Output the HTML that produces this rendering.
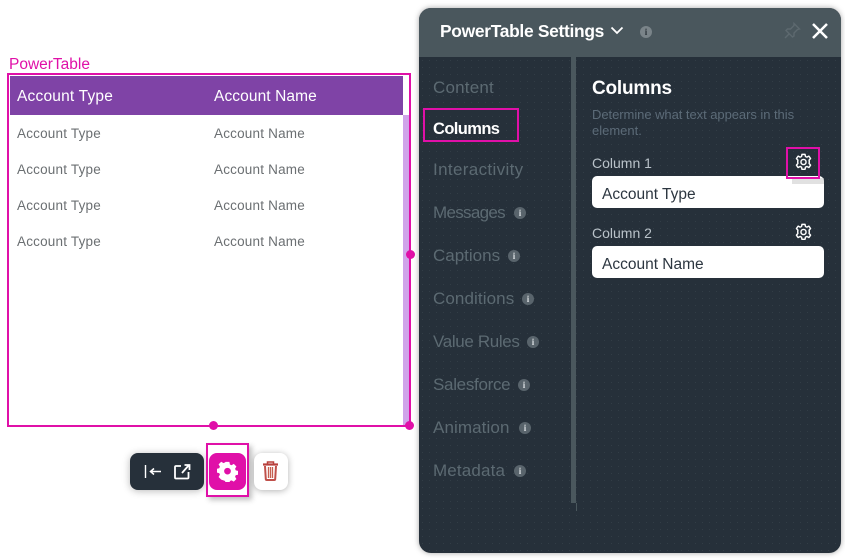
<!DOCTYPE html>
<html>
<head>
<meta charset="utf-8">
<style>
html,body{margin:0;padding:0;background:#fff;}
body{width:845px;height:560px;position:relative;overflow:hidden;font-family:"Liberation Sans",sans-serif;}
.a{position:absolute;white-space:nowrap;}
.t{font-size:13.5px;color:#6b6f72;letter-spacing:.2px;line-height:16px;}
.n{font-size:17px;color:#5c6a72;line-height:20px;left:433px;}
.i{position:absolute;width:12px;height:12px;border-radius:50%;background:#59646c;color:#d8dde0;font:bold 9px/12px "Liberation Serif",serif;text-align:center;}
.in{left:592px;width:232px;height:32px;background:#fff;border-radius:5px;}
.il{font-size:15.5px;color:#2c3640;line-height:18px;left:602px;}
.lb{font-size:14px;color:#b9c2c9;line-height:16px;left:592px;}
</style>
</head>
<body>
<div class="a" style="left:9px;top:56px;font-size:15.5px;line-height:18px;color:#e010a8;">PowerTable</div>

<div class="a" style="left:403px;top:115px;width:6px;height:310px;background:#d0a3ea;"></div>
<div class="a" style="left:10px;top:76px;width:393px;height:39px;background:#7f43a6;"></div>
<div class="a" style="left:17px;top:88px;font-size:15.500px;line-height:18px;color:#fff;letter-spacing:.2px;">Account Type</div>
<div class="a" style="left:214px;top:88px;font-size:15.500px;line-height:18px;color:#fff;letter-spacing:.1px;">Account Name</div>

<div class="a t" style="left:17px;top:126px;">Account Type</div><div class="a t" style="left:214px;top:126px;">Account Name</div>
<div class="a t" style="left:17px;top:162px;">Account Type</div><div class="a t" style="left:214px;top:162px;">Account Name</div>
<div class="a t" style="left:17px;top:198px;">Account Type</div><div class="a t" style="left:214px;top:198px;">Account Name</div>
<div class="a t" style="left:17px;top:234px;">Account Type</div><div class="a t" style="left:214px;top:234px;">Account Name</div>

<div class="a" style="left:7px;top:73px;width:400px;height:350px;border:2px solid #e010a8;"></div>
<div class="a" style="left:406px;top:250px;width:9px;height:9px;border-radius:50%;background:#e010a8;"></div>
<div class="a" style="left:209px;top:421px;width:9px;height:9px;border-radius:50%;background:#e010a8;"></div>
<div class="a" style="left:405px;top:421px;width:9px;height:9px;border-radius:50%;background:#e010a8;"></div>

<div class="a" style="left:130px;top:453px;width:74px;height:37px;border-radius:8px;background:#26303a;box-shadow:0 1px 8px rgba(0,0,0,.28);"></div>
<svg class="a" style="left:130px;top:453px;" width="74" height="37" viewBox="0 0 74 37" fill="none" stroke="#fff">
<path d="M15.500 12v13" stroke-width="1.400"/>
<path d="M31 18.500H20M24 15.500l-3.500 3 3.500 3" stroke-width="1.500"/>
<path d="M51 13h-5a1 1 0 0 0-1 1v10.500a1 1 0 0 0 1 1h11.500a1 1 0 0 0 1-1V19" stroke-width="1.800"/>
<path d="M52 20l7-8M54.500 12H59.500V17" stroke-width="1.800"/>
</svg>

<div class="a" style="left:209px;top:453px;width:37px;height:37px;border-radius:8px;background:#e010a8;"></div>
<div class="a" style="left:206px;top:443px;width:39px;height:50px;border:2px solid #e010a8;box-shadow:3px 3px 5px rgba(0,0,0,.25);"></div>
<svg class="a" style="left:217px;top:461px;" width="21" height="21" viewBox="0 0 20 20">
<path fill="#fff" fill-rule="evenodd" d="M8.200.800h3.600l.5 2.500 1.500.7 2.200-1.300 2.500 2.500-1.300 2.200.7 1.500 2.300.5v3.600l-2.300.5-.7 1.500 1.300 2.200-2.500 2.500-2.200-1.300-1.500.7-.5 2.300H8.200l-.5-2.300-1.500-.7L4 17.700l-2.500-2.500 1.300-2.200-.7-1.500-2.300-.5V7.400l2.300-.5.7-1.500L1.500 3.200 4 .7l2.200 1.300 1.500-.7zM10 6.500a3.200 3.200 0 1 0 0 6.400 3.200 3.200 0 0 0 0-6.400z"/>
</svg>

<div class="a" style="left:254px;top:453px;width:34px;height:37px;border-radius:8px;background:#fff;box-shadow:0 1px 7px rgba(0,0,0,.3);"></div>
<svg class="a" style="left:262px;top:461px;" width="17" height="20" viewBox="0 0 17 20" fill="none">
<path d="M1 3.500h15" stroke="#b8403c" stroke-width="2.200"/>
<path d="M5.500 2.500V1h6v1.500" stroke="#b8403c" stroke-width="1.500"/>
<path d="M3 5l.8 13a1 1 0 0 0 1 1h7.400a1 1 0 0 0 1-1L14 5" stroke="#c0504a" stroke-width="2"/>
<path d="M6.500 6v11M8.500 6v11M10.500 6v11" stroke="#c65f4f" stroke-width="1.300"/>
</svg>

<!-- Panel -->
<div class="a" style="left:419px;top:8px;width:422px;height:545px;border-radius:12px;background-color:#26303a;background-image:radial-gradient(circle,#323d46 .6px,transparent .8px);background-size:7px 7px;overflow:hidden;box-shadow:0 0 6px rgba(0,0,0,.35);">
  <div style="position:absolute;left:0;top:0;width:422px;height:49px;background:#4a575d;"></div>
  <div style="position:absolute;left:152px;top:49px;width:5px;height:446px;background:#4a575d;"></div>
  <div style="position:absolute;left:157px;top:495px;width:1px;height:8px;background:#4a575d;"></div>
</div>

<div class="a" style="left:440px;top:20px;font-size:17.400px;font-weight:bold;line-height:22px;color:#fff;letter-spacing:-.3px;">PowerTable Settings</div>
<svg class="a" style="left:609px;top:25px;" width="16" height="12" viewBox="0 0 16 12" fill="none"><path d="M2.500 2.500l5.500 5.500 5.500-5.500" stroke="#fff" stroke-width="1.800"/></svg>
<div class="i" style="left:640px;top:26px;background:#7a8489;color:#2b343a;">i</div>
<svg class="a" style="left:783px;top:22px;" width="18" height="18" viewBox="0 0 18 18" fill="none" stroke="#5d696f" stroke-width="1.400"><path d="M11 1.500l5.500 5.500-2 .5-3.500 3.500v3L9.500 15 3 8.500 4.500 7h3L11 3.500zM6 12l-4 4"/></svg>
<svg class="a" style="left:811px;top:22px;" width="18" height="18" viewBox="0 0 18 18" fill="none" stroke="#fff" stroke-width="2.500"><path d="M2 2l14 14M16 2L2 16"/></svg>

<div class="a n" style="top:78px;letter-spacing:.2px;">Content</div>
<div class="a n" style="top:119px;color:#fff;font-weight:bold;font-size:16.500px;letter-spacing:-.6px;">Columns</div>
<div class="a" style="left:423px;top:108px;width:92px;height:30px;border:2px solid #e010a8;"></div>
<div class="a n" style="top:160px;letter-spacing:.35px;">Interactivity</div>
<div class="a n" style="top:203px;letter-spacing:-.7px;">Messages</div><div class="i" style="left:514px;top:207px;">i</div>
<div class="a n" style="top:246px;">Captions</div><div class="i" style="left:508px;top:250px;">i</div>
<div class="a n" style="top:289px;letter-spacing:.1px;">Conditions</div><div class="i" style="left:522px;top:293px;">i</div>
<div class="a n" style="top:332px;letter-spacing:-.35px;">Value Rules</div><div class="i" style="left:527px;top:336px;">i</div>
<div class="a n" style="top:375px;letter-spacing:-.3px;">Salesforce</div><div class="i" style="left:518px;top:379px;">i</div>
<div class="a n" style="top:418px;letter-spacing:.1px;">Animation</div><div class="i" style="left:519px;top:422px;">i</div>
<div class="a n" style="top:461px;letter-spacing:.15px;">Metadata</div><div class="i" style="left:514px;top:465px;">i</div>

<div class="a" style="left:592px;top:77px;font-size:19px;font-weight:bold;line-height:24px;color:#fff;letter-spacing:-.2px;">Columns</div>
<div class="a" style="left:592px;top:107px;font-size:13px;line-height:16px;color:#5c6b78;letter-spacing:-.05px;">Determine what text appears in this</div>
<div class="a" style="left:592px;top:123px;font-size:13px;line-height:16px;color:#5c6b78;">element.</div>

<div class="a lb" style="top:155px;">Column 1</div>
<div class="a in" style="top:176px;"></div>
<div class="a il" style="top:186px;">Account Type</div>
<div class="a lb" style="top:225px;">Column 2</div>
<div class="a in" style="top:246px;"></div>
<div class="a il" style="top:256px;">Account Name</div>

<div class="a" style="left:792px;top:178px;width:32px;height:6px;background:#c9c9c9;opacity:.55;"></div>
<svg class="a" style="left:795px;top:153px;" width="17" height="18" viewBox="0 0 20 20" fill="none" stroke="#fff" stroke-width="1.700" stroke-linejoin="round"><path d="M8.200 1h3.600l.5 2.500 1.700.8 2.300-1.200 2 2.800-1.700 1.900.2 2-.2 2 1.700 1.900-2 2.800-2.300-1.200-1.700.8-.5 2.500H8.200l-.5-2.500-1.700-.8-2.300 1.200-2-2.800 1.700-1.900-.2-2 .2-2-1.700-1.900 2-2.800 2.300 1.200 1.700-.8z"/><circle cx="10" cy="10" r="3"/></svg>
<svg class="a" style="left:795px;top:223px;" width="17" height="18" viewBox="0 0 20 20" fill="none" stroke="#fff" stroke-width="1.700" stroke-linejoin="round"><path d="M8.200 1h3.600l.5 2.500 1.700.8 2.300-1.200 2 2.800-1.700 1.900.2 2-.2 2 1.700 1.900-2 2.800-2.300-1.200-1.700.8-.5 2.500H8.200l-.5-2.500-1.700-.8-2.300 1.200-2-2.800 1.700-1.900-.2-2 .2-2-1.700-1.900 2-2.800 2.300 1.200 1.700-.8z"/><circle cx="10" cy="10" r="3"/></svg>
<div class="a" style="left:786px;top:147px;width:30px;height:28px;border:2px solid #e010a8;"></div>
</body>
</html>
